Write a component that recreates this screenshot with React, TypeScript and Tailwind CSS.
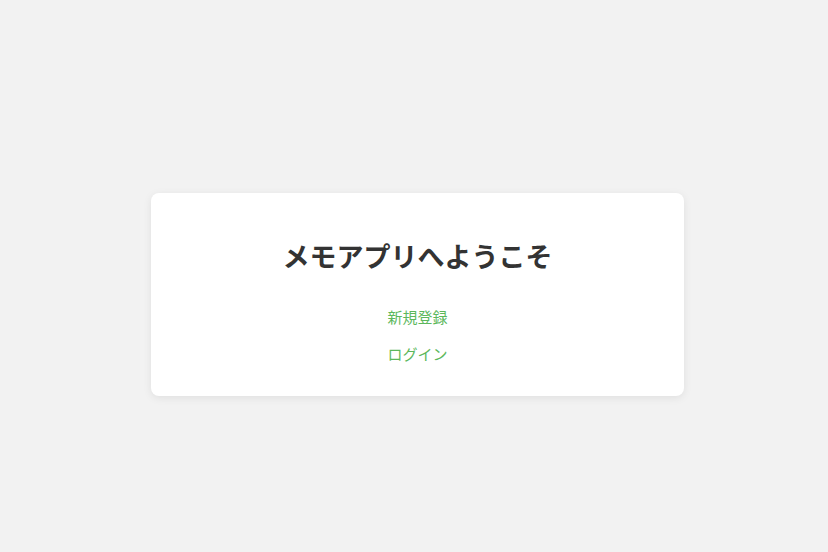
export default function App() {
    return (
        <div
            className="min-h-[552px] bg-[#f2f2f2] pt-[193px] pl-[151px]"
            style={{ fontFamily: '"Noto Sans CJK JP", "Noto Sans", sans-serif' }}
        >
            <div className="w-[533px] rounded-lg bg-white pt-[45px] pb-[30px] text-center shadow-[0_2px_8px_rgba(0,0,0,0.08)]">
                <h1 className="text-[27px] leading-[36px] font-bold text-[#333333]">メモアプリへようこそ</h1>
                <ul className="mt-[30px] flex flex-col items-center gap-[12px]">
                    <li>
                        <a href="#" className="text-[15px] leading-[24px] text-[#5cb85c]">新規登録</a>
                    </li>
                    <li>
                        <a href="#" className="text-[15px] leading-[24px] text-[#5cb85c]">ログイン</a>
                    </li>
                </ul>
            </div>
        </div>
    );
}
